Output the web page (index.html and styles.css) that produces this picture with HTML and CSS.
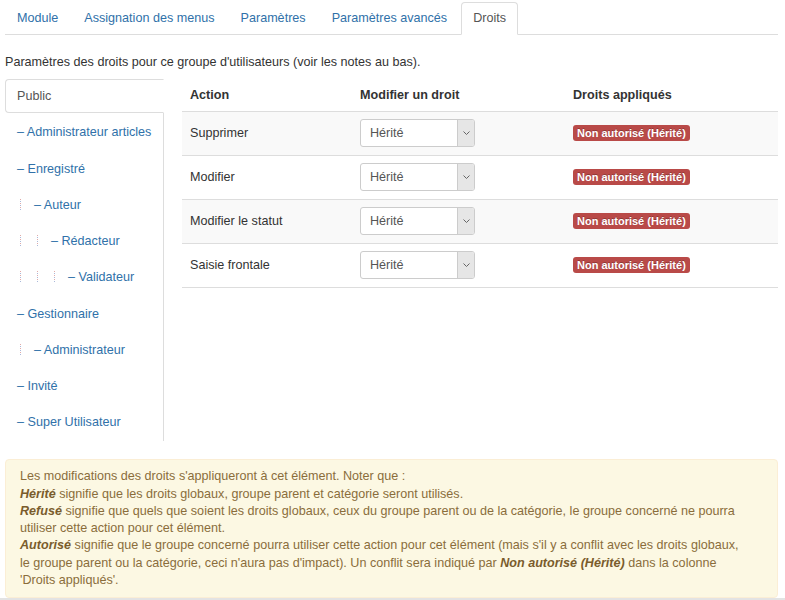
FILE: index.html
```html
<!DOCTYPE html>
<html lang="fr">
<head>
<meta charset="utf-8">
<title>Droits</title>
<link rel="stylesheet" href="styles.css">
</head>
<body>
<div class="page">
  <ul class="tabs">
    <li><a href="#">Module</a></li>
    <li><a href="#">Assignation des menus</a></li>
    <li><a href="#">Paramètres</a></li>
    <li><a href="#">Paramètres avancés</a></li>
    <li class="active"><a href="#">Droits</a></li>
  </ul>
  <p class="desc">Paramètres des droits pour ce groupe d'utilisateurs (voir les notes au bas).</p>
  <div class="perm">
    <ul class="groups">
      <li class="active"><a href="#">Public</a></li>
      <li><a href="#">– Administrateur articles</a></li>
      <li><a href="#">– Enregistré</a></li>
      <li><a href="#"><span class="lvl"></span>– Auteur</a></li>
      <li><a href="#"><span class="lvl"></span><span class="lvl"></span>– Rédacteur</a></li>
      <li><a href="#"><span class="lvl"></span><span class="lvl"></span><span class="lvl"></span>– Validateur</a></li>
      <li><a href="#">– Gestionnaire</a></li>
      <li><a href="#"><span class="lvl"></span>– Administrateur</a></li>
      <li><a href="#">– Invité</a></li>
      <li><a href="#">– Super Utilisateur</a></li>
    </ul>
    <table class="rights">
      <thead>
        <tr><th class="c1">Action</th><th class="c2">Modifier un droit</th><th class="c3">Droits appliqués</th></tr>
      </thead>
      <tbody>
        <tr class="odd"><td>Supprimer</td><td><div class="select"><span class="val">Hérité</span><span class="arrow"><svg width="7" height="4" viewBox="0 0 7 4"><path d="M0.5 0.5 L3.5 3.5 L6.5 0.5" fill="none" stroke="#666" stroke-width="1"/></svg></span></div></td><td><span class="badge">Non autorisé (Hérité)</span></td></tr>
        <tr><td>Modifier</td><td><div class="select"><span class="val">Hérité</span><span class="arrow"><svg width="7" height="4" viewBox="0 0 7 4"><path d="M0.5 0.5 L3.5 3.5 L6.5 0.5" fill="none" stroke="#666" stroke-width="1"/></svg></span></div></td><td><span class="badge">Non autorisé (Hérité)</span></td></tr>
        <tr class="odd"><td>Modifier le statut</td><td><div class="select"><span class="val">Hérité</span><span class="arrow"><svg width="7" height="4" viewBox="0 0 7 4"><path d="M0.5 0.5 L3.5 3.5 L6.5 0.5" fill="none" stroke="#666" stroke-width="1"/></svg></span></div></td><td><span class="badge">Non autorisé (Hérité)</span></td></tr>
        <tr><td>Saisie frontale</td><td><div class="select"><span class="val">Hérité</span><span class="arrow"><svg width="7" height="4" viewBox="0 0 7 4"><path d="M0.5 0.5 L3.5 3.5 L6.5 0.5" fill="none" stroke="#666" stroke-width="1"/></svg></span></div></td><td><span class="badge">Non autorisé (Hérité)</span></td></tr>
      </tbody>
    </table>
  </div>
  <div class="alert">
    Les modifications des droits s'appliqueront à cet élément. Noter que :<br>
    <b><i>Hérité</i></b> signifie que les droits globaux, groupe parent et catégorie seront utilisés.<br>
    <b><i>Refusé</i></b> signifie que quels que soient les droits globaux, ceux du groupe parent ou de la catégorie, le groupe concerné ne pourra<br>utiliser cette action pour cet élément.<br>
    <b><i>Autorisé</i></b> signifie que le groupe concerné pourra utiliser cette action pour cet élément (mais s'il y a conflit avec les droits globaux,<br>le groupe parent ou la catégorie, ceci n'aura pas d'impact). Un conflit sera indiqué par <b><i>Non autorisé (Hérité)</i></b> dans la colonne<br>'Droits appliqués'.
  </div>
</div>
<div class="bottom-bar"></div>
</body>
</html>
```

FILE: styles.css
```css
html, body {
  margin: 0;
  padding: 0;
  background: #fff;
}
body {
  font-family: "Liberation Sans", Arial, Helvetica, sans-serif;
  font-size: 12.6px;
  line-height: 18px;
  color: #333;
  width: 785px;
  height: 600px;
  overflow: hidden;
}
a {
  color: #3071a9;
  text-decoration: none;
}
.page {
  padding: 2px 7px 0 5px;
}
.tabs {
  list-style: none;
  margin: 0;
  padding: 0;
  display: flex;
  border-bottom: 1px solid #ddd;
}
.tabs li {
  margin: 0 2px -1px 0;
}
.tabs a {
  display: block;
  padding: 6px 11px 7px;
  line-height: 18px;
  border: 1px solid transparent;
  border-radius: 4px 4px 0 0;
}
.tabs .active a {
  color: #555;
  background: #fff;
  border-color: #ddd #ddd transparent;
}
.desc {
  margin: 18px 0 8px;
}
.perm {
  display: flex;
  align-items: flex-start;
}
.groups {
  list-style: none;
  margin: 0 18px 0 0;
  padding: 0 0 2px;
  width: 158px;
  border-right: 1px solid #ddd;
  flex-shrink: 0;
}
.groups li {
  margin-bottom: 2.25px;
}
.groups li:last-child {
  margin-bottom: 0;
}
.groups a {
  display: flex;
  align-items: center;
  height: 32px;
  padding: 0 11px;
  border: 1px solid transparent;
  margin-right: -1px;
  border-radius: 4px 0 0 4px;
  white-space: nowrap;
}
.groups .active a {
  color: #555;
  background: #fff;
  border-color: #ddd transparent #ddd #ddd;
}
.lvl {
  display: inline-block;
  width: 17px;
  height: 12px;
  position: relative;
}
.lvl::before {
  content: "";
  position: absolute;
  left: 3px;
  top: 0;
  width: 1px;
  height: 12px;
  background: repeating-linear-gradient(to bottom, #e0aaa8 0 1px, transparent 1px 2px, #aab8d8 2px 3px, transparent 3px 4px);
}
.rights {
  border-collapse: collapse;
  width: 596px;
  flex-shrink: 0;
}
.rights th {
  text-align: left;
  font-weight: bold;
  padding: 7px 8px 7px;
  line-height: 18px;
  vertical-align: bottom;
}
.rights .c1 { width: 154px; }
.rights .c2 { width: 197px; }
.rights td {
  padding: 7px 8px 8px;
  border-top: 1px solid #ddd;
  vertical-align: middle;
  height: 28px;
  line-height: 18px;
}
.rights tbody tr:last-child td {
  border-bottom: 1px solid #ddd;
}
.rights tr.odd td {
  background: #f9f9f9;
}
.select {
  display: flex;
  width: 113px;
  height: 26px;
  border: 1px solid #ccc;
  border-radius: 3px;
  background: #fff;
  overflow: hidden;
}
.select .val {
  flex: 1;
  padding-left: 9px;
  line-height: 26px;
  color: #555;
}
.select .arrow {
  width: 16px;
  border-left: 1px solid #ccc;
  background: #e6e6e6;
  display: flex;
  align-items: center;
  justify-content: center;
}
.badge {
  display: inline-block;
  padding: 2px 4px;
  font-size: 11px;
  font-weight: bold;
  line-height: 12px;
  color: #fff;
  background: #b94a48;
  border-radius: 3px;
  text-shadow: 0 -1px 0 rgba(0,0,0,0.25);
  white-space: nowrap;
}
.alert {
  margin-top: 18px;
  padding: 8px 35px 8px 14px;
  background: #fcf8e3;
  border: 1px solid #fbeed5;
  border-radius: 4px;
  color: #8a6d3b;
  line-height: 17.3px;
}
.alert b {
  color: #7a5c2c;
}
.bottom-bar {
  height: 3px;
  background: #e3e3e3;
}
```
